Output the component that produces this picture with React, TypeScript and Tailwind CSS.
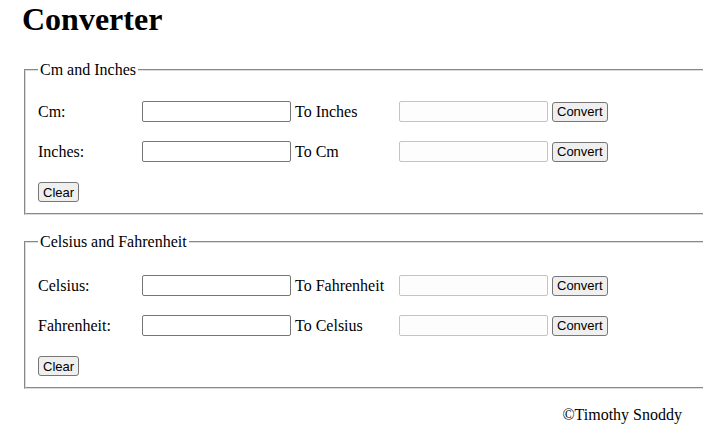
import React from "react";

const btn =
  "h-[20px] px-[4px] border border-[#767676] rounded-[3px] bg-[#efefef] text-[13px] leading-none font-['Liberation_Sans',Arial,sans-serif] text-black";

const Row = ({ label, toLabel }: { label: string; toLabel: string }) => (
  <div className="flex items-center h-[21px]">
    <span className="w-[104px] shrink-0">{label}</span>
    <input
      type="text"
      className="w-[149px] h-[21px] shrink-0 border border-[#767676] rounded-[2px] bg-white px-[2px] text-[13px]"
    />
    <span className="w-[108px] shrink-0 pl-[4px]">{toLabel}</span>
    <input
      type="text"
      readOnly
      className="w-[149px] h-[21px] shrink-0 border border-[#c4c4c4] rounded-[2px] bg-[#fdfdfd] px-[2px] text-[13px]"
    />
    <button className={"ml-[4px] " + btn}>Convert</button>
  </div>
);

const Section = ({
  title,
  top,
  rows,
}: {
  title: string;
  top: string;
  rows: { label: string; toLabel: string }[];
}) => (
  <fieldset className="ml-[2px] w-[720px] border-2 [border-style:groove] border-[#dcdcdc] px-[12px] pb-[11px]">
    <legend className="px-[2px] leading-[18px]">{title}</legend>
    <div className={top + " flex flex-col"}>
      {rows.map((r, i) => (
        <div key={r.label} className={i > 0 ? "mt-[19px]" : ""}>
          <Row label={r.label} toLabel={r.toLabel} />
        </div>
      ))}
      <div className="mt-[20px] flex">
        <button className={btn}>Clear</button>
      </div>
    </div>
  </fieldset>
);

export default function App() {
  return (
    <div className="min-h-screen bg-white text-black font-['Liberation_Serif','Times_New_Roman',serif] text-[16px] pl-[22px] overflow-hidden">
      <h1 className="text-[32px] font-bold leading-[37px] pt-[1px]">Converter</h1>
      <div className="mt-[23px]">
        <Section
          title="Cm and Inches"
          top="mt-[22px]"
          rows={[
            { label: "Cm:", toLabel: "To Inches" },
            { label: "Inches:", toLabel: "To Cm" },
          ]}
        />
      </div>
      <div className="mt-[18px]">
        <Section
          title="Celsius and Fahrenheit"
          top="mt-[24px]"
          rows={[
            { label: "Celsius:", toLabel: "To Fahrenheit" },
            { label: "Fahrenheit:", toLabel: "To Celsius" },
          ]}
        />
      </div>
      <p className="text-right pr-[21px] mt-[14px]">©Timothy Snoddy</p>
    </div>
  );
}
